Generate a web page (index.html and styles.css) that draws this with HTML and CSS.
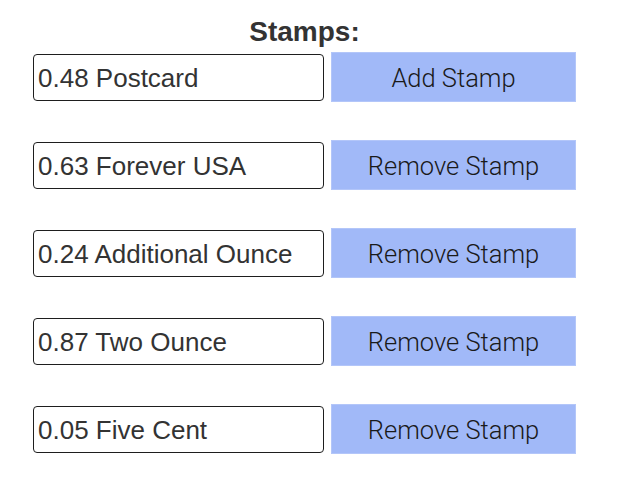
FILE: index.html
```html
<!DOCTYPE html>
<html>
<head>
<meta charset="utf-8">
<link rel="stylesheet" href="styles.css">
</head>
<body>
<div class="stamps">
  <h2 class="title">Stamps:</h2>
  <div class="row">
    <input class="field" type="text" value="0.48 Postcard">
    <button class="btn">Add Stamp</button>
  </div>
  <div class="row">
    <input class="field" type="text" value="0.63 Forever USA">
    <button class="btn">Remove Stamp</button>
  </div>
  <div class="row">
    <input class="field" type="text" value="0.24 Additional Ounce">
    <button class="btn">Remove Stamp</button>
  </div>
  <div class="row">
    <input class="field" type="text" value="0.87 Two Ounce">
    <button class="btn">Remove Stamp</button>
  </div>
  <div class="row">
    <input class="field" type="text" value="0.05 Five Cent">
    <button class="btn">Remove Stamp</button>
  </div>
</div>
</body>
</html>
```
FILE: styles.css
```css
html, body {
  margin: 0;
  padding: 0;
  background: #ffffff;
}
.stamps {
  width: 543px;
  padding: 15px 0 0 33px;
  font-family: "Liberation Sans", Arial, sans-serif;
  display: flex;
  flex-direction: column;
  gap: 38px;
}
.title {
  margin: 0 0 -38px 0;
  text-align: center;
  font-size: 28px;
  line-height: 34px;
  font-weight: bold;
  color: #333333;
  height: 37px;
}
.row {
  display: flex;
  align-items: center;
  gap: 7px;
  height: 50px;
}
.field {
  box-sizing: border-box;
  width: 291px;
  height: 47px;
  border: 1.5px solid #1e1e1e;
  border-radius: 4px;
  padding: 2px 0 0 4px;
  font-family: "Liberation Sans", Arial, sans-serif;
  font-size: 26px;
  color: #333333;
  background: #ffffff;
  outline: none;
}
.btn {
  box-sizing: border-box;
  width: 245px;
  height: 50px;
  border: 1px solid #b3c6f9;
  background: #a1b9f8;
  font-family: "Roboto", "Liberation Sans", sans-serif;
  font-weight: 300;
  font-size: 25.5px;
  color: #1a1a1a;
  padding: 2px 0 0 0;
}
```
